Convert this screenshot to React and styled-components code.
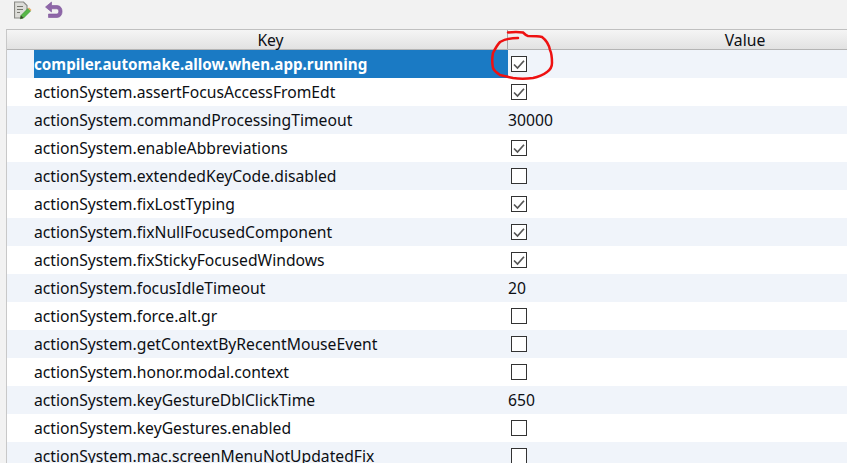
import React from "react"
import styled, { createGlobalStyle } from "styled-components"

const GlobalStyle = createGlobalStyle`
  html, body {
    margin: 0;
    padding: 0;
    background: #f2f2f2;
    overflow: hidden;
  }
`

const Page = styled.div`
  position: relative;
  width: 847px;
  height: 463px;
  overflow: hidden;
  font-family: "Noto Sans", sans-serif;
  font-size: 15.7px;
  color: #0c0f14;
`

const Toolbar = styled.div`
  display: flex;
  align-items: flex-start;
  gap: 11px;
  height: 29px;
  padding: 1px 0 0 14px;
  box-sizing: border-box;
`

const Table = styled.div`
  width: 980px;
  margin-left: 6px;
  border-top: 1px solid #c0c0c0;
  border-left: 1px solid #c8c8c8;
  background: #fff;
`

const Header = styled.div`
  display: grid;
  grid-template-columns: 27px 474px 474px;
  height: 19px;
  background: linear-gradient(#f5f5f5, #e2e2e2);
  border-bottom: 1px solid #b4b4b4;
`

const HeaderCell = styled.div`
  display: flex;
  align-items: center;
  justify-content: center;
  padding-top: 2px;
  line-height: 17px;
  border-right: ${(p) => (p.$divider ? "1px solid #a8a8a8" : "none")};
  box-sizing: border-box;
`

const Row = styled.div`
  display: grid;
  grid-template-columns: 27px 474px 474px;
  height: 28px;
  align-items: center;
  background: ${(p) => (p.$striped ? "#f0f4fa" : "#fff")};
`

const KeyCell = styled.div`
  display: flex;
  align-items: center;
  height: 100%;
  white-space: nowrap;
  background: ${(p) => (p.$selected ? "#1a7ac4" : "transparent")};
  color: ${(p) => (p.$selected ? "#fff" : "inherit")};
  font-weight: ${(p) => (p.$selected ? 700 : 400)};
  font-size: ${(p) => (p.$selected ? "15.2px" : "inherit")};
`

const ValueCell = styled.div`
  display: flex;
  align-items: center;
  height: 100%;
`

const CheckBox = styled.span`
  display: flex;
  align-items: center;
  justify-content: center;
  width: 16px;
  height: 16px;
  margin-left: 3px;
  box-sizing: border-box;
  border: 1px solid #333;
  background: #fff;
`

const Scribble = styled.svg`
  position: absolute;
  left: 480px;
  top: 25px;
`

const rows = [
  ["compiler.automake.allow.when.app.running", true],
  ["actionSystem.assertFocusAccessFromEdt", true],
  ["actionSystem.commandProcessingTimeout", "30000"],
  ["actionSystem.enableAbbreviations", true],
  ["actionSystem.extendedKeyCode.disabled", false],
  ["actionSystem.fixLostTyping", true],
  ["actionSystem.fixNullFocusedComponent", true],
  ["actionSystem.fixStickyFocusedWindows", true],
  ["actionSystem.focusIdleTimeout", "20"],
  ["actionSystem.force.alt.gr", false],
  ["actionSystem.getContextByRecentMouseEvent", false],
  ["actionSystem.honor.modal.context", false],
  ["actionSystem.keyGestureDblClickTime", "650"],
  ["actionSystem.keyGestures.enabled", false],
  ["actionSystem.mac.screenMenuNotUpdatedFix", false],
]

const EditIcon = () => (
  <svg width="20" height="20" viewBox="0 0 20 20">
    <path d="M.5 1h9l3.500 3.500v5l-6 7.500H.5z" fill="#dcdcd8" stroke="#8a8a86" strokeWidth="1.200" />
    <path d="M3 5.500h6M3 8.500h6M3 11.500h3" stroke="#77776f" strokeWidth="1.200" />
    <path d="M7 14.500l7-7 2.500 2.500-7 7-3.200 .8z" fill="#58b848" stroke="#3c9a36" strokeWidth=".8" />
    <path d="M14 7.500l1-1 2.500 2.500-1 1z" fill="#e8a860" />
    <path d="M6.300 17.800l.7-3.300 2.500 2.500z" fill="#40402f" />
  </svg>
)

const UndoIcon = () => (
  <svg width="20" height="20" viewBox="0 0 20 20">
    <path
      d="M6.500 1L.5 6l6 5V7.800h5c3 0 3 5.200 0 5.200H3.500v3.500H12c6.800 0 6.800-12 0-12H6.500z"
      fill="#8e66a8"
      stroke="#7c5498"
      strokeWidth=".6"
    />
  </svg>
)

const Check = () => (
  <svg width="14" height="14" viewBox="0 0 14 14">
    <path d="M2 7.500l3.500 3.500L12 3.800" fill="none" stroke="#555" strokeWidth="1.700" />
  </svg>
)

export default function App() {
  return (
    <Page>
      <GlobalStyle />
      <Toolbar>
        <EditIcon />
        <UndoIcon />
      </Toolbar>
      <Table>
        <Header>
          <HeaderCell />
          <HeaderCell $divider>Key</HeaderCell>
          <HeaderCell>Value</HeaderCell>
        </Header>
        {rows.map(([key, value], i) => (
          <Row key={key} $striped={i % 2 === 0}>
            <span />
            <KeyCell $selected={i === 0}>{key}</KeyCell>
            <ValueCell>
              {typeof value === "string" ? (
                value
              ) : (
                <CheckBox>{value && <Check />}</CheckBox>
              )}
            </ValueCell>
          </Row>
        ))}
      </Table>
      <Scribble width="80" height="60" viewBox="0 0 80 60">
        <path
          d="M28 7.500C33 7 39 7 43 7.500c2 2 3 3 5 3.500 5 0 10 0 14 1 4 3 7 8 8 13 2 4 2 9 2 13 0 4-2 7-5 9-4 3-9 5-14 6-7 1-14 1-20 0-5-1-9-2-13-3-3-2-6-4-7-7-1-5-1-10 0-15 2-4 4-8 7-11 5-3 11-4 18-4"
          fill="none"
          stroke="#ee1111"
          strokeWidth="2.500"
          strokeLinecap="round"
        />
      </Scribble>
    </Page>
  )
}
